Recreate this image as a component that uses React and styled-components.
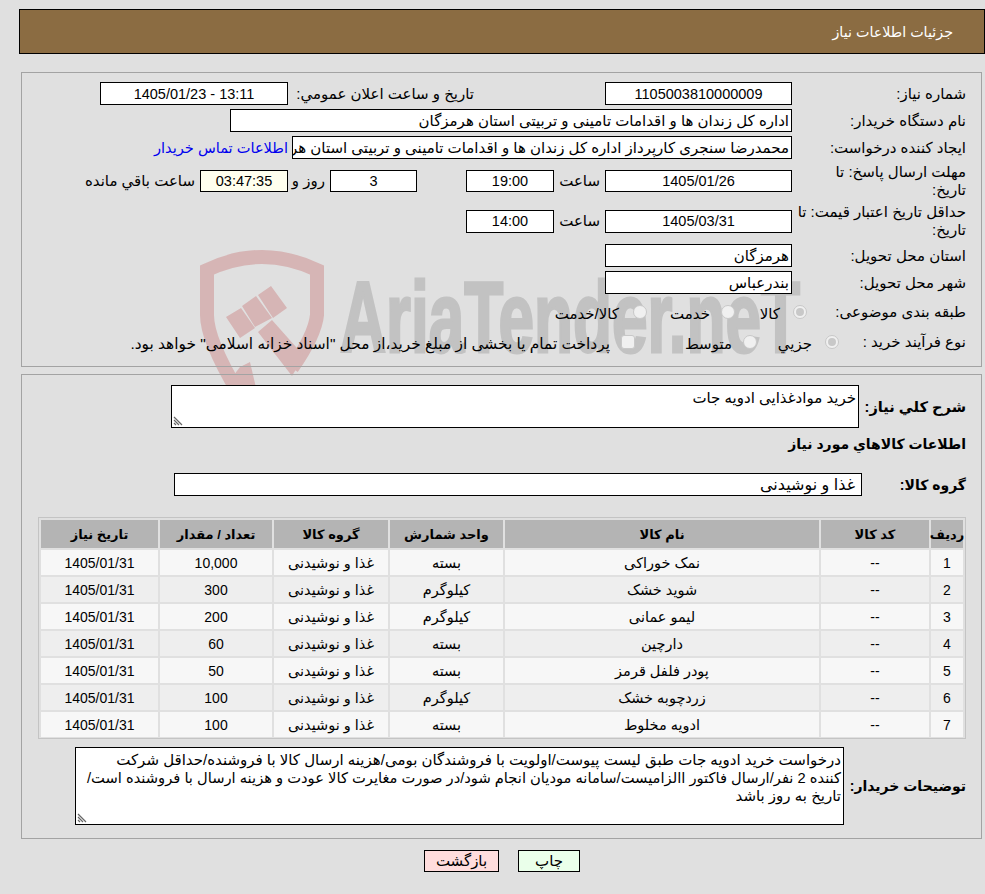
import React from "react";
import styled, { createGlobalStyle } from "styled-components";

const Global = createGlobalStyle`
  html, body { margin: 0; padding: 0; background: #e0e0e0; }
  body { font-family: "Liberation Sans", "DejaVu Sans", sans-serif; color: #000; }
`;

const FONT = `"Liberation Sans", "DejaVu Sans", sans-serif`;

const Page = styled.div`
  position: relative;
  width: 985px;
  height: 894px;
  overflow: hidden;
  direction: rtl;
  font-family: ${FONT};
  font-size: 15px;
  padding-top: 9px;
  box-sizing: border-box;
`;
const Watermark = styled.svg`
  position: absolute;
  left: 195px;
  top: 245px;
  width: 620px;
  height: 150px;
  z-index: 0;
`;
const Header = styled.div`
  position: relative;
  z-index: 1;
  box-sizing: border-box;
  margin: 0 0 0 19px;
  height: 45px;
  background: #8b6c42;
  border: 1px solid #000;
  color: #fff;
  display: flex;
  align-items: center;
  padding-right: 31px;
  font-size: 14.3px;
`;
const Panel = styled.section`
  position: relative;
  z-index: 1;
  box-sizing: border-box;
  margin: ${(p) => p.$top}px 3px 0 21px;
  height: ${(p) => p.$h}px;
  border: 1px solid #a3a3a3;
  padding-top: ${(p) => p.$pad}px;
`;
const Row = styled.div`
  display: flex;
  align-items: center;
  height: ${(p) => p.$h}px;
  margin-bottom: ${(p) => p.$mb || 0}px;
`;
const Label = styled.div`
  width: ${(p) => p.$w || 189}px;
  flex: none;
  box-sizing: border-box;
  padding-right: 15px;
  line-height: 18px;
`;
const Field = styled.div`
  box-sizing: border-box;
  flex: none;
  width: ${(p) => p.$w}px;
  height: ${(p) => p.$h || 23}px;
  margin-right: ${(p) => p.$mr || 0}px;
  border: 1px solid #000;
  background: ${(p) => p.$bg || "#fff"};
  display: flex;
  align-items: center;
  justify-content: ${(p) => (p.$start ? "flex-start" : "center")};
  padding: 0 ${(p) => p.$pr || 2}px 0 2px;
  white-space: nowrap;
  overflow: hidden;
  font-size: ${(p) => p.$fs || (p.$num ? 14.5 : 15)}px;
`;
const Plain = styled.span`
  flex: none;
  box-sizing: border-box;
  width: ${(p) => (p.$w ? `${p.$w}px` : "auto")};
  margin-right: ${(p) => p.$mr || 0}px;
  padding-top: ${(p) => p.$dy || 0}px;
  white-space: nowrap;
  font-size: ${(p) => p.$fs || 15}px;
  color: ${(p) => p.$c || "#000"};
`;
const Radio = styled.span`
  flex: none;
  box-sizing: border-box;
  width: 14px;
  height: 14px;
  border-radius: ${(p) => (p.$square ? "3px" : "50%")};
  border: 1px solid #c8c8c8;
  background: #f0f0f0;
  display: flex;
  align-items: center;
  justify-content: center;
  &::after {
    content: "";
    display: ${(p) => (p.$on ? "block" : "none")};
    width: 8px;
    height: 8px;
    border-radius: 50%;
    background: #c8c8c8;
  }
`;
const SectionRow = styled.div`
  display: flex;
  align-items: center;
  height: ${(p) => p.$h}px;
  margin-top: ${(p) => p.$mt || 0}px;
  margin-bottom: ${(p) => p.$mb || 0}px;
`;
const BoldLabel = styled.div`
  flex: none;
  width: ${(p) => p.$w}px;
  box-sizing: border-box;
  padding-right: 15px;
  font-weight: 700;
  font-size: ${(p) => p.$fs || 14}px;
  white-space: nowrap;
`;
const TextBox = styled.div`
  position: relative;
  box-sizing: border-box;
  flex: none;
  width: ${(p) => p.$w}px;
  height: ${(p) => p.$h}px;
  border: 1px solid #000;
  background: #fff;
  padding: 3px 2px;
  line-height: 18px;
  font-size: 15px;
  white-space: nowrap;
  overflow: hidden;
`;
const TextLine = styled.div`
  font-size: ${(p) => p.$fs || 15}px;
`;
const Grip = styled.svg`
  position: absolute;
  left: 1px;
  bottom: 1px;
  width: 10px;
  height: 10px;
`;
const TableWrap = styled.div`
  margin: 0 15px 0 16px;
  border: 1px solid #c4c4c4;
  padding: 2px;
  height: 222px;
  box-sizing: border-box;
`;
const Table = styled.div`
  display: grid;
  grid-template-columns: 32px 108px 314px 113px 114px 112px 117px;
  grid-template-rows: 28px;
  grid-auto-rows: 25px;
  gap: 2px;
`;
const HeadCell = styled.div`
  background: #b4b4b4;
  font-weight: 700;
  font-size: 13px;
  display: flex;
  align-items: center;
  justify-content: center;
  white-space: nowrap;
`;
const Cell = styled.div`
  background: ${(p) => (p.$odd ? "#f7f7f7" : "#eeeeee")};
  display: flex;
  align-items: center;
  justify-content: center;
  font-size: ${(p) => (p.$num ? 14 : 14.5)}px;
`;
const Buttons = styled.div`
  position: relative;
  z-index: 1;
  display: flex;
  justify-content: center;
  gap: 19px;
  margin-top: 11px;
  padding-left: 19px;
`;
const Button = styled.button`
  box-sizing: border-box;
  width: ${(p) => p.$w}px;
  height: 22px;
  border: 1px solid #000;
  background: ${(p) => p.$bg};
  padding: 0;
  font-family: ${FONT};
  font-size: 15px;
  color: #000;
`;

const GripIcon = () => (
  <Grip viewBox="0 0 10 10">
    <path d="M1 1 L9 9 M1 4 L6 9 M1 7 L3 9" stroke="#666" strokeWidth="1.2" fill="none" />
  </Grip>
);

const heads = ["رديف", "کد کالا", "نام کالا", "واحد شمارش", "گروه کالا", "تعداد / مقدار", "تاریخ نیاز"];
const rows = [
  ["1", "نمک خوراکی", "بسته", "10,000"],
  ["2", "شوید خشک", "کیلوگرم", "300"],
  ["3", "لیمو عمانی", "کیلوگرم", "200"],
  ["4", "دارچین", "بسته", "60"],
  ["5", "پودر فلفل قرمز", "بسته", "50"],
  ["6", "زردچوبه خشک", "کیلوگرم", "100"],
  ["7", "ادویه مخلوط", "بسته", "100"],
];

const RED = "#d6b5b5";

export default function App() {
  return (
    <Page>
      <Global />
      <Watermark viewBox="195 245 620 150">
        <path d="M238 392 Q207 340 207 315 L207 270 Q262 244 317 270 L317 315 Q315 335 292 368" fill="none" stroke={RED} strokeWidth="14" />
        <path fill={RED} d="M226 317 L241 308 L255 328 L240 338 Z M242 306 L256 296 L272 318 L255 327 Z M258 295 L271 286 L287 308 L273 318 Z" />
        <path fill={RED} d="M258 332 L272 320 L304 356 L292 376 Z M250 362 L257 392 L232 392 L230 380 L240 367 Z" />
        <text x="340" y="352" fontFamily="Liberation Sans" fontWeight="700" fontSize="100" fill="#c2c2c2" stroke="#c2c2c2" strokeWidth="3" textLength="460" lengthAdjust="spacingAndGlyphs" direction="ltr" style={{ unicodeBidi: "bidi-override" }}>AriaTender.neT</text>
      </Watermark>
      <Header>جزئیات اطلاعات نیاز</Header>

      <Panel $top={18} $h={295} $pad={9}>
        <Row $h={23} $mb={4}>
          <Label>شماره نیاز:</Label>
          <Field $w={187} $num>1105003810000009</Field>
          <Plain $mr={131} $w={186}>تاریخ و ساعت اعلان عمومي:</Plain>
          <Field $w={188} $num>13:11 - 1405/01/23</Field>
        </Row>
        <Row $h={23} $mb={4}>
          <Label>نام دستگاه خریدار:</Label>
          <Field $w={562} $start>اداره کل زندان ها و اقدامات تامینی و تربیتی استان هرمزگان</Field>
        </Row>
        <Row $h={23} $mb={4}>
          <Label>ایجاد کننده درخواست:</Label>
          <Field $w={500} $start>محمدرضا سنجری کارپرداز اداره کل زندان ها و اقدامات تامینی و تربیتی استان هرمزگان</Field>
          <Plain $mr={4} $c="#0000ee" $fs={14.6}>اطلاعات تماس خریدار</Plain>
        </Row>
        <Row $h={36} $mb={4}>
          <Label>مهلت ارسال پاسخ: تا<br />تاریخ:</Label>
          <Field $w={187} $h={22} $num>1405/01/26</Field>
          <Plain $mr={5} $w={46}>ساعت</Plain>
          <Field $w={88} $h={22} $num>19:00</Field>
          <Field $w={87} $h={22} $mr={49} $num>3</Field>
          <Plain $mr={5} $w={37}>روز و</Plain>
          <Field $w={88} $h={22} $bg="#ffffee" $num>03:47:35</Field>
          <Plain $mr={5}>ساعت باقي مانده</Plain>
        </Row>
        <Row $h={36} $mb={5}>
          <Label>حداقل تاریخ اعتبار قیمت: تا تاریخ:</Label>
          <Field $w={187} $num>1405/03/31</Field>
          <Plain $mr={5} $w={46}>ساعت</Plain>
          <Field $w={88} $num>14:00</Field>
        </Row>
        <Row $h={23} $mb={4}>
          <Label>استان محل تحویل:</Label>
          <Field $w={187} $start>هرمزگان</Field>
        </Row>
        <Row $h={23} $mb={3}>
          <Label>شهر محل تحویل:</Label>
          <Field $w={187} $start>بندرعباس</Field>
        </Row>
        <Row $h={30}>
          <Label $w={174}>طبقه بندی موضوعی:</Label>
          <Radio $on />
          <Plain $mr={13} $w={45} $dy={4}>کالا</Plain>
          <Radio />
          <Plain $mr={11} $w={63} $dy={4}>خدمت</Plain>
          <Radio />
          <Plain $mr={14} $dy={4}>کالا/خدمت</Plain>
        </Row>
        <Row $h={30}>
          <Label $w={142}>نوع فرآیند خرید :</Label>
          <Radio $on />
          <Plain $mr={13} $w={55} $dy={3}>جزيي</Plain>
          <Radio />
          <Plain $mr={11} $w={97} $dy={3}>متوسط</Plain>
          <Radio $square />
          <Plain $mr={11} $dy={3} $fs={15.4}>پرداخت تمام یا بخشی از مبلغ خرید،از محل "اسناد خزانه اسلامی" خواهد بود.</Plain>
        </Row>
      </Panel>

      <Panel $top={7} $h={465} $pad={10}>
        <SectionRow $h={43} $mb={4}>
          <BoldLabel $w={122} $fs={14.6}>شرح کلي نیاز:</BoldLabel>
          <TextBox $w={688} $h={43}>
            خرید موادغذایی ادویه جات
            <GripIcon />
          </TextBox>
        </SectionRow>
        <SectionRow $h={23} $mb={18}>
          <BoldLabel $w={300}>اطلاعات کالاهاي مورد نیاز</BoldLabel>
        </SectionRow>
        <SectionRow $h={23} $mb={21}>
          <BoldLabel $w={119}>گروه کالا:</BoldLabel>
          <Field $w={688} $start $fs={16} $pr={6}>غذا و نوشیدنی</Field>
        </SectionRow>
        <TableWrap>
          <Table>
            {heads.map((h) => (
              <HeadCell key={h}>{h}</HeadCell>
            ))}
            {rows.map((r, i) => (
              <React.Fragment key={r[0]}>
                <Cell $odd={i % 2 === 0} $num>{r[0]}</Cell>
                <Cell $odd={i % 2 === 0} $num>--</Cell>
                <Cell $odd={i % 2 === 0}>{r[1]}</Cell>
                <Cell $odd={i % 2 === 0}>{r[2]}</Cell>
                <Cell $odd={i % 2 === 0}>غذا و نوشیدنی</Cell>
                <Cell $odd={i % 2 === 0} $num>{r[3]}</Cell>
                <Cell $odd={i % 2 === 0} $num>1405/01/31</Cell>
              </React.Fragment>
            ))}
          </Table>
        </TableWrap>
        <SectionRow $h={78} $mt={8}>
          <BoldLabel $w={137}>توضیحات خریدار:</BoldLabel>
          <TextBox $w={769} $h={78}>
            <TextLine>درخواست خرید ادویه جات طبق لیست پیوست/اولویت با فروشندگان بومی/هزینه ارسال کالا با فروشنده/حداقل شرکت</TextLine>
            <TextLine $fs={14.7}>کننده 2 نفر/ارسال فاکتور االزامیست/سامانه مودیان انجام شود/در صورت مغایرت کالا عودت و هزینه ارسال با فروشنده است/</TextLine>
            <TextLine>تاریخ به روز باشد</TextLine>
            <GripIcon />
          </TextBox>
        </SectionRow>
      </Panel>

      <Buttons>
        <Button $w={62} $bg="#eaffea">چاپ</Button>
        <Button $w={75} $bg="#ffdddd">بازگشت</Button>
      </Buttons>
    </Page>
  );
}
